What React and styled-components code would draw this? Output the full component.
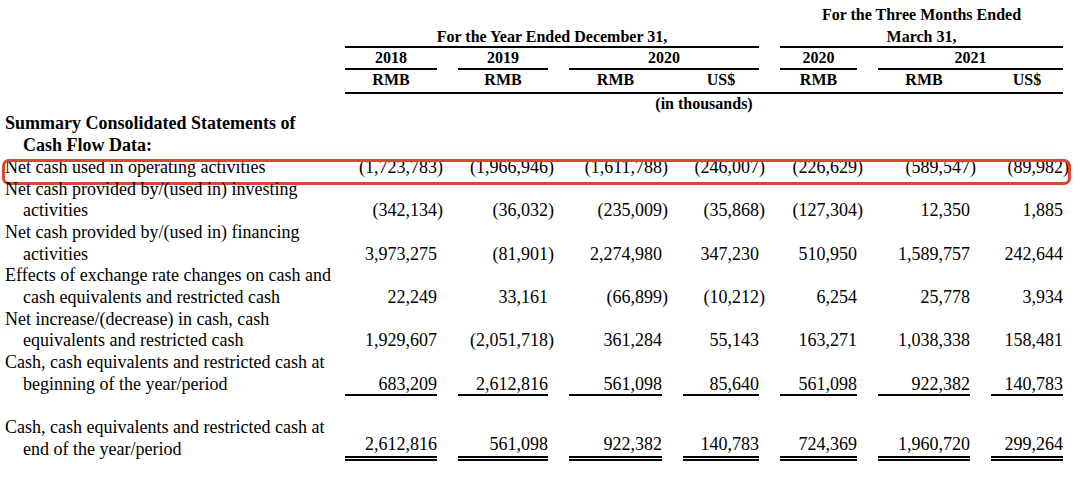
import React from 'react';
import styled, { createGlobalStyle } from 'styled-components';

// label column + seven figure columns, 21px between them
const COLS = '319px 92px 90px 93px 76px 77px 92px 72px';
const FIGURE_COLS = '92px 90px 93px 76px 77px 92px 72px';
const LINE = 21.7;

const GlobalStyle = createGlobalStyle`
  html, body {
    margin: 0;
    background: #ffffff;
  }
  body {
    font-family: "Liberation Serif", "Times New Roman", serif;
    color: #000000;
  }
`;

const Page = styled.div`
  width: 1080px;
  height: 484px;
  box-sizing: border-box;
  padding: 5px 0 0 5px;
  overflow: hidden;
`;

const Row = styled.div`
  position: relative;
  display: grid;
  width: fit-content;
  grid-template-columns: ${COLS};
  column-gap: 21px;
  align-items: end;
  margin-top: ${props => (props.$gap ? `${LINE}px` : '0')};
`;

const Head = styled.div`
  grid-column: ${props => props.$span || 'auto'};
  height: ${LINE}px;
  box-sizing: border-box;
  font-size: 16px;
  font-weight: 700;
  line-height: 20px;
  text-align: center;
  white-space: nowrap;
  border-bottom: ${props => (props.$rule ? '2px solid #000' : 'none')};
`;

const Note = styled(Head)`
  height: ${LINE - 2}px;
`;

const Band = styled.div`
  grid-column: 2 / -1;
  display: grid;
  grid-template-columns: ${FIGURE_COLS};
  column-gap: 21px;
  border-bottom: 2px solid #000;
`;

const Label = styled.div`
  align-self: start;
  font-size: 18px;
  line-height: ${LINE}px;
  font-weight: ${props => (props.$bold ? 700 : 400)};
  white-space: nowrap;
`;

const LabelLine = styled.div`
  padding-left: ${props => (props.$indent ? '18px' : '0')};
`;

const Value = styled.div`
  font-size: 18px;
  line-height: ${LINE}px;
  height: ${LINE}px;
  box-sizing: ${props => (props.$rule === 'double' ? 'content-box' : 'border-box')};
  text-align: right;
  white-space: nowrap;
  border-bottom: ${props =>
    props.$rule === 'single' ? '2px solid #000' : props.$rule === 'double' ? '5px double #000' : 'none'};
`;

// closing parenthesis of a negative figure hangs past the column edge
const Close = styled.span`
  margin-right: -6px;
`;

const Highlight = styled.div`
  position: absolute;
  left: -3px;
  right: -8px;
  top: 2px;
  bottom: -6px;
  border: 3px solid #dc4434;
  border-radius: 7px;
  pointer-events: none;
`;

const rows = [
  {
    label: ['Net cash used in operating activities'],
    values: ['(1,723,783)', '(1,966,946)', '(1,611,788)', '(246,007)', '(226,629)', '(589,547)', '(89,982)'],
    highlight: true,
  },
  {
    label: ['Net cash provided by/(used in) investing', 'activities'],
    values: ['(342,134)', '(36,032)', '(235,009)', '(35,868)', '(127,304)', '12,350', '1,885'],
  },
  {
    label: ['Net cash provided by/(used in) financing', 'activities'],
    values: ['3,973,275', '(81,901)', '2,274,980', '347,230', '510,950', '1,589,757', '242,644'],
  },
  {
    label: ['Effects of exchange rate changes on cash and', 'cash equivalents and restricted cash'],
    values: ['22,249', '33,161', '(66,899)', '(10,212)', '6,254', '25,778', '3,934'],
  },
  {
    label: ['Net increase/(decrease) in cash, cash', 'equivalents and restricted cash'],
    values: ['1,929,607', '(2,051,718)', '361,284', '55,143', '163,271', '1,038,338', '158,481'],
  },
  {
    label: ['Cash, cash equivalents and restricted cash at', 'beginning of the year/period'],
    values: ['683,209', '2,612,816', '561,098', '85,640', '561,098', '922,382', '140,783'],
    rule: 'single',
  },
  {
    label: ['Cash, cash equivalents and restricted cash at', 'end of the year/period'],
    values: ['2,612,816', '561,098', '922,382', '140,783', '724,369', '1,960,720', '299,264'],
    rule: 'double',
    gap: true,
  },
];

const Figure = ({ text }) => {
  if (text.startsWith('(')) {
    return (
      <>
        {text.slice(0, -1)}
        <Close>)</Close>
      </>
    );
  }
  return text;
};

const App = () => (
  <>
    <GlobalStyle />
    <Page>
      <Row>
        <Head $span="6 / 9">For the Three Months Ended</Head>
      </Row>
      <Row>
        <Head $span="2 / 6" $rule>For the Year Ended December 31,</Head>
        <Head $span="6 / 9" $rule>March 31,</Head>
      </Row>
      <Row>
        <Head $span="2" $rule>2018</Head>
        <Head $span="3" $rule>2019</Head>
        <Head $span="4 / 6" $rule>2020</Head>
        <Head $span="6" $rule>2020</Head>
        <Head $span="7 / 9" $rule>2021</Head>
      </Row>
      <Row>
        <Band>
          {['RMB', 'RMB', 'RMB', 'US$', 'RMB', 'RMB', 'US$'].map((c, i) => (
            <Head key={i}>{c}</Head>
          ))}
        </Band>
      </Row>
      <Row>
        <Note $span="2 / -1">(in thousands)</Note>
      </Row>

      <Row>
        <Label $bold>
          <LabelLine>Summary Consolidated Statements of</LabelLine>
          <LabelLine $indent>Cash Flow Data:</LabelLine>
        </Label>
      </Row>

      {rows.map((row, i) => (
        <Row key={i} $gap={row.gap}>
          <Label>
            {row.label.map((line, j) => (
              <LabelLine key={j} $indent={j > 0}>
                {line}
              </LabelLine>
            ))}
          </Label>
          {row.values.map((v, j) => (
            <Value key={j} $rule={row.rule}>
              <Figure text={v} />
            </Value>
          ))}
          {row.highlight && <Highlight />}
        </Row>
      ))}
    </Page>
  </>
);

export default App;
